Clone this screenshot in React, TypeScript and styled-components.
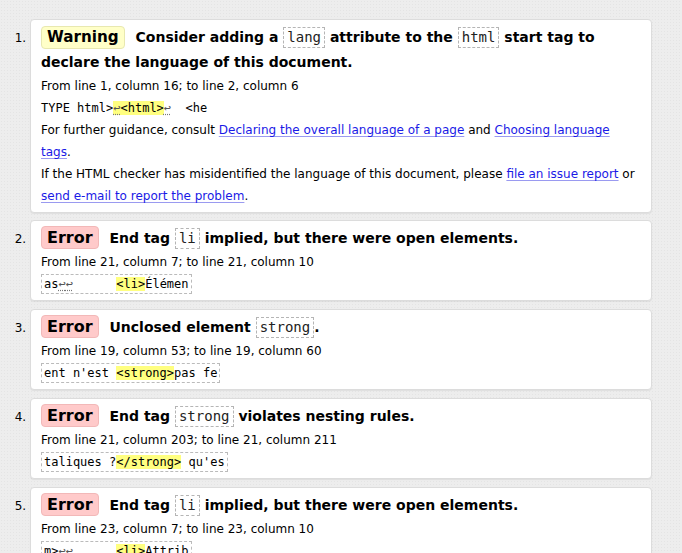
import React from "react";
import styled, { createGlobalStyle, css } from "styled-components";

const Global = createGlobalStyle`
  html, body { margin: 0; padding: 0; }
  body {
    background-color: #ededed;
    background-image: radial-gradient(#e4e4e4 0.7px, transparent 0.8px);
    background-size: 3px 3px;
    font-family: "DejaVu Sans", Verdana, sans-serif;
    color: #000;
  }
`;

const List = styled.ol`
  margin: 19px 30px 0 0;
  padding: 0 0 0 30px;
  font-size: 12px;
  color: #111;
`;

const Card = styled.li<{ $first?: boolean }>`
  background: #fff;
  border: 1px solid #dcdcdc;
  border-radius: 4px;
  box-shadow: 0 1px 1px rgba(0, 0, 0, 0.06);
  padding: 5px 10px;
  margin-bottom: ${(p) => (p.$first ? "7px" : "8px")};
  font-size: 12px;
  line-height: 22px;
  color: #000;
`;

const Title = styled.p`
  margin: 0;
  font-size: 14px;
  line-height: 25px;
  font-weight: bold;
  color: #000;
`;

const Badge = styled.strong<{ $kind: "warning" | "error" }>`
  display: inline-block;
  line-height: 21px;
  padding: 0 5px;
  border-radius: 4px;
  margin-right: 6px;
  color: #000;
  ${(p) =>
    p.$kind === "warning"
      ? css`
          font-size: 15.2px;
          background: #ffffc8;
          border: 1px solid #e8e8b0;
        `
      : css`
          font-size: 16px;
          background: #ffcaca;
          border: 1px solid #f2b8b8;
        `}
`;

const Code = styled.code`
  display: inline-block;
  font-family: "DejaVu Sans Mono", monospace;
  font-size: 14px;
  font-weight: normal;
  line-height: 17px;
  padding: 1px 3px;
  border: 1px dashed #b5b5b5;
  color: #222;
`;

const Para = styled.p`
  margin: 0;
`;

const Extract = styled.code<{ $boxed?: boolean }>`
  font-family: "DejaVu Sans Mono", monospace;
  font-size: 12px;
  white-space: pre;
  color: #000;
  padding: 2px 2px;
  ${(p) =>
    p.$boxed
      ? css`
          border: 1px dashed #bbb;
        `
      : css`
          padding: 0;
        `}
`;

const Mark = styled.b`
  font-weight: normal;
  background: #ffff80;
`;

const Lf = styled.span`
  color: #555;
  text-decoration: underline dotted #777;
  text-underline-offset: 2px;
`;

const Link = styled.a`
  color: #1a1ae6;
  text-decoration: underline;
  text-decoration-color: #9a9af0;
  text-underline-offset: 2px;
`;

const LF = () => <Lf title="Line break">↩</Lf>;

type Err = {
  title: React.ReactNode;
  loc: string;
  extract: React.ReactNode;
};

const errors: Err[] = [
  {
    title: (
      <>
        End tag <Code>li</Code> implied, but there were open elements.
      </>
    ),
    loc: "From line 21, column 7; to line 21, column 10",
    extract: (
      <>
        as<LF />
        <LF />
        {"      "}
        <Mark>&lt;li&gt;</Mark>Élémen
      </>
    ),
  },
  {
    title: (
      <>
        Unclosed element <Code>strong</Code>.
      </>
    ),
    loc: "From line 19, column 53; to line 19, column 60",
    extract: (
      <>
        {"ent n'est "}
        <Mark>&lt;strong&gt;</Mark>pas fe
      </>
    ),
  },
  {
    title: (
      <>
        End tag <Code>strong</Code> violates nesting rules.
      </>
    ),
    loc: "From line 21, column 203; to line 21, column 211",
    extract: (
      <>
        {"taliques ?"}
        <Mark>&lt;/strong&gt;</Mark>
        {" qu'es"}
      </>
    ),
  },
  {
    title: (
      <>
        End tag <Code>li</Code> implied, but there were open elements.
      </>
    ),
    loc: "From line 23, column 7; to line 23, column 10",
    extract: (
      <>
        m&gt;<LF />
        <LF />
        {"      "}
        <Mark>&lt;li&gt;</Mark>Attrib
      </>
    ),
  },
];

export default function App() {
  return (
    <>
      <Global />
      <List>
        <Card $first>
          <Title>
            <Badge $kind="warning">Warning</Badge> Consider adding a <Code>lang</Code>{" "}
            attribute to the <Code>html</Code> start tag to declare the language of this
            document.
          </Title>
          <Para>From line 1, column 16; to line 2, column 6</Para>
          <Para>
            <Extract>
              {"TYPE html>"}
              <Mark>
                <LF />
                &lt;html&gt;
              </Mark>
              <LF />
              {"  <he"}
            </Extract>
          </Para>
          <Para>
            For further guidance, consult{" "}
            <Link href="#">Declaring the overall language of a page</Link> and{" "}
            <Link href="#">Choosing language tags</Link>.
          </Para>
          <Para>
            If the HTML checker has misidentified the language of this document, please{" "}
            <Link href="#">file an issue report</Link> or{" "}
            <Link href="#">send e-mail to report the problem</Link>.
          </Para>
        </Card>
        {errors.map((e, i) => (
          <Card key={i}>
            <Title>
              <Badge $kind="error">Error</Badge> {e.title}
            </Title>
            <Para>{e.loc}</Para>
            <Para>
              <Extract $boxed>{e.extract}</Extract>
            </Para>
          </Card>
        ))}
      </List>
    </>
  );
}
